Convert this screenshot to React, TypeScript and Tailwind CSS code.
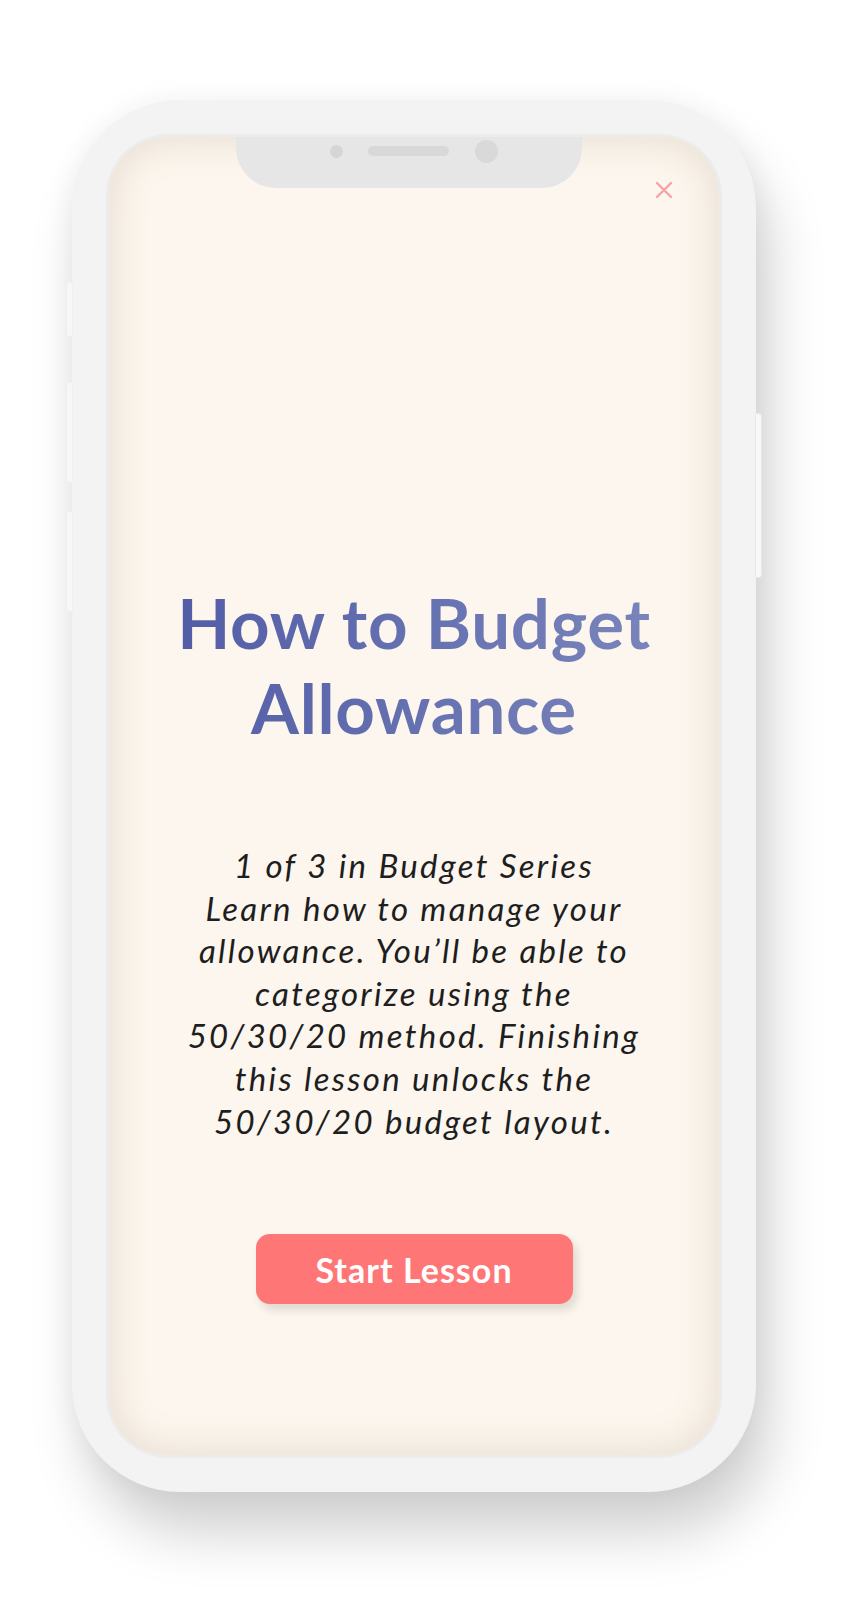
const lines = [
  '1 of 3 in Budget Series',
  'Learn how to manage your',
  'allowance. You’ll be able to',
  'categorize using the',
  '50/30/20 method. Finishing',
  'this lesson unlocks the',
  '50/30/20 budget layout.',
];

const App = () => {
  return (
    <div className="w-[842px] h-[1618px] bg-white overflow-hidden font-['Lato','Noto_Sans',sans-serif]">
      <div className="pt-[100px] pl-[72px]">
        {/* Phone */}
        <div className="relative w-[684px] h-[1392px]">
          {/* side buttons */}
          <div className="absolute left-[-6px] top-[182px] w-[7px] h-[55px] rounded-l-[3px] bg-[#f7f7f7] border border-[#efefef]" />
          <div className="absolute left-[-6px] top-[282px] w-[7px] h-[101px] rounded-l-[3px] bg-[#f7f7f7] border border-[#efefef]" />
          <div className="absolute left-[-6px] top-[411px] w-[7px] h-[101px] rounded-l-[3px] bg-[#f7f7f7] border border-[#efefef]" />
          <div className="absolute right-[-6px] top-[313px] w-[7px] h-[165px] rounded-r-[3px] bg-[#f7f7f7] border border-[#e8e8e8]" />

          <div className="h-full rounded-[108px] bg-[#f3f3f3] p-[34px] shadow-[0_0_30px_rgba(0,0,0,0.05),14px_42px_55px_rgba(0,0,0,0.18)]">
            <div className="h-full rounded-[62px] bg-[#ececec] p-[3px]">
              {/* Screen */}
              <div className="relative h-full rounded-[58px] bg-[#fcf6ee] shadow-[inset_0_0_40px_rgba(140,115,80,0.2)] flex flex-col items-center">
                {/* notch */}
                <div className="absolute top-0 left-[127px] w-[346px] h-[51px] rounded-b-[40px] bg-[#e6e6e6]">
                  <div className="flex items-center h-[28px] pl-[94px]">
                    <div className="w-[13px] h-[13px] rounded-full bg-[#d5d5d5]" />
                    <div className="ml-[25px] w-[81px] h-[10px] rounded-full bg-[#d8d8d8]" />
                    <div className="ml-[26px] w-[23px] h-[23px] rounded-full bg-[#d9d9d9]" />
                  </div>
                </div>

                {/* close */}
                <svg
                  className="absolute left-[546px] top-[44px]"
                  width="18"
                  height="18"
                  viewBox="0 0 18 18"
                  fill="none"
                  stroke="#f8a2a2"
                  strokeWidth="2.4"
                  strokeLinecap="round"
                >
                  <path d="M2 2 L16 16 M16 2 L2 16" />
                </svg>

                <h1 className="mt-[443px] text-center text-[69px] leading-[85px] font-bold tracking-[0.01em] bg-gradient-to-r from-[#525da6] to-[#7a84bb] bg-clip-text text-transparent">
                  How to Budget
                  <br />
                  Allowance
                </h1>

                <p className="mt-[94px] text-center italic text-[33px] leading-[42.6px] text-[#1e1e1e] tracking-[0.07em]">
                  {lines.map((l, i) => (
                    <span key={i} className="block">
                      {l}
                    </span>
                  ))}
                </p>

                <button className="mt-[92px] w-[317px] h-[70px] rounded-[14px] bg-[#ff7676] text-white text-[34px] font-bold tracking-[0.03em] shadow-[4px_6px_10px_rgba(0,0,0,0.12)]">
                  Start Lesson
                </button>
              </div>
            </div>
          </div>
        </div>
      </div>
    </div>
  );
};

export default App;
